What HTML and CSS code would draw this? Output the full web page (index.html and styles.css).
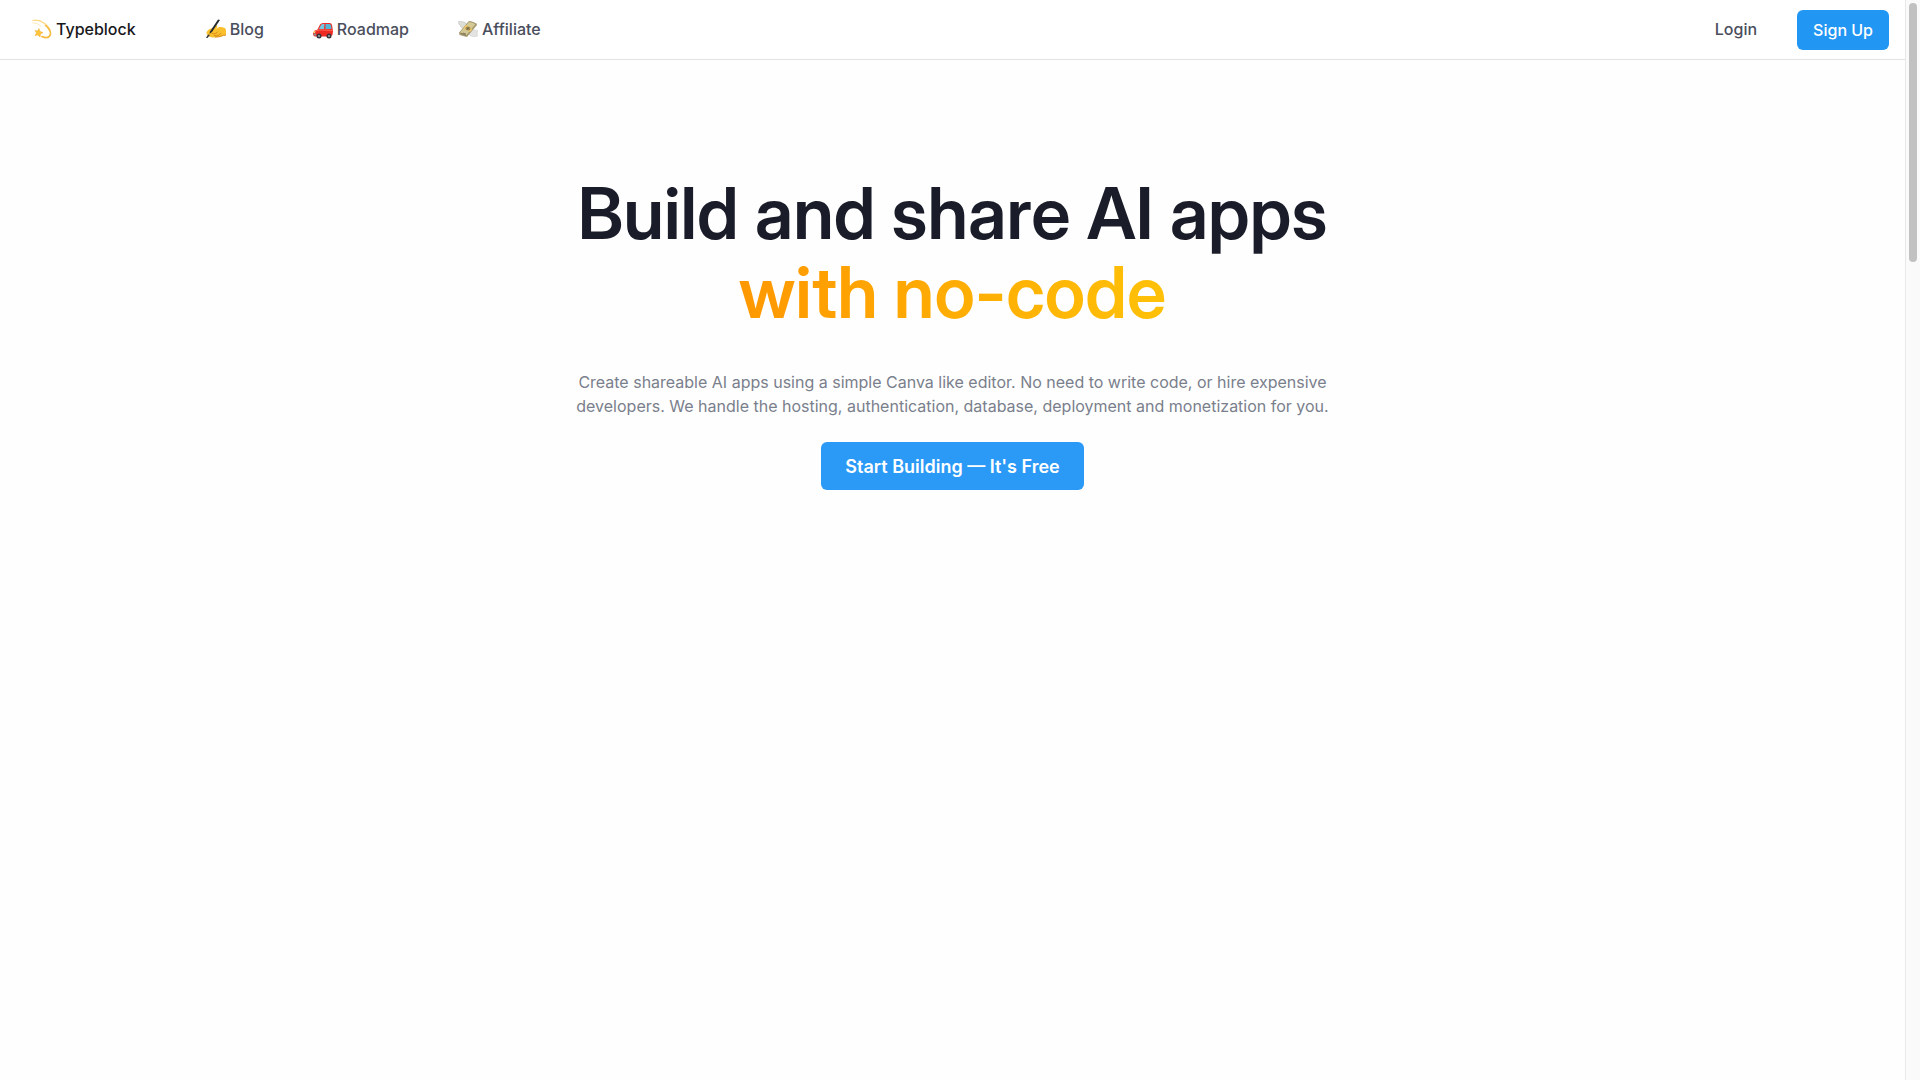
FILE: index.html
```html
<!DOCTYPE html>
<html lang="en">
<head>
    <meta charset="UTF-8">
    <meta name="viewport" content="width=device-width, initial-scale=1.0">
    <title>Typeblock</title>
    <link rel="stylesheet" href="styles.css">
</head>
<body>
    <div class="page">
        <header class="navbar">
            <a class="brand" href="#">
                <svg class="icon" viewBox="0 0 40 40" aria-hidden="true">
                    <path d="M2 3 C16 -1 38 14 37 29 C36 38 27 38 19 35" fill="none" stroke="#fbd77c" stroke-width="2.5" stroke-linecap="round"/>
                    <path d="M27 13 C35 19 39 28 36 33 C33 38 26 38 20 35" fill="none" stroke="#f6b93b" stroke-width="3" stroke-linecap="round"/>
                    <path d="M1 8 C7 7 14 10 18 15" fill="none" stroke="#fde9b8" stroke-width="2"/>
                    <path d="M14 19 L16 25 L22 27 L17 30 L16 36 L12 32 L6 33 L9 28 L6 23 L11 24 Z" fill="#fcc638" stroke="#f2a93b" stroke-width="1"/>
                </svg>
                <span>Typeblock</span>
            </a>
            <nav class="links">
                <a href="#">
                    <svg class="icon" viewBox="0 0 40 40" aria-hidden="true">
                        <path d="M2 25 C5 20 9 19 14 18 L19 13 C22 12 24 14 22 17 L19 20 C25 15 31 15 35 17 C39 18 40 20 40 24 L40 32 C35 31 31 36 25 36 L14 37 C9 37 4 35 4 32 C1 31 0 28 2 25 Z" fill="#fbc02d"/>
                        <path d="M12 29 C17 31 22 28 24 25 M16 33 C23 34 28 32 30 28 M18 36 C28 37 33 32 40 32" fill="none" stroke="#d98c16" stroke-width="2"/>
                        <path d="M24 1 L28 2 L12 26 L7 30 L8 25 Z" fill="#262a31"/>
                        <path d="M0 38 L4 31 L8 32 L3 38 Z" fill="#363636"/>
                    </svg>
                    <span>Blog</span>
                </a>
                <a href="#">
                    <svg class="icon" viewBox="0 0 40 40" aria-hidden="true">
                        <path d="M9 21 L14 11 Q16 8 20 8 L33 8 Q37 8 38 12 L40 24 L39 32 Q34 37 25 35 L4 35 Q0 34 0 29 Q1 23 9 21 Z" fill="#ed2b24"/>
                        <path d="M12 20 L16 12 Q17 10 20 10 L23 10 L22 20 Z" fill="#70c8e2"/>
                        <path d="M25 10 L33 10 Q35 10 36 13 L37 20 L25 20 Z" fill="#54b5d4"/>
                        <path d="M3 24 L13 22 L22 22 L39 23" stroke="#ff6a55" stroke-width="2" fill="none"/>
                        <path d="M1 29 L6 29 L6 33 L2 33 Z" fill="#8a9195"/>
                        <path d="M1 25 L5 24 L4 28 L1 28 Z" fill="#ffd66c"/>
                        <circle cx="12" cy="34" r="5" fill="#34363b"/>
                        <circle cx="12" cy="34" r="2" fill="#a2a8ae"/>
                        <circle cx="32" cy="34" r="5" fill="#34363b"/>
                        <circle cx="32" cy="34" r="2" fill="#a2a8ae"/>
                    </svg>
                    <span>Roadmap</span>
                </a>
                <a href="#">
                    <svg class="icon" viewBox="0 0 40 40" aria-hidden="true">
                        <path d="M1 5 C8 4 16 6 19 12 L14 19 C8 19 4 16 5 13 C2 12 1 9 1 5 Z" fill="#dcddd7" stroke="#b8bbb6"/>
                        <path d="M22 25 C28 20 35 22 39 23 C39 28 37 30 39 34 C35 36 27 36 22 31 Z" fill="#e4e5e2" stroke="#c4c7c3"/>
                        <path d="M2 28 L22 4 Q28 4 37 9 L38 12 L18 36 Q13 35 3 32 Z" fill="#a99d73"/>
                        <path d="M3 27 L22 5 Q29 6 36 10 L17 33 Q10 29 3 27 Z" fill="#d4c995" stroke="#8c825c"/>
                        <path d="M10 18 L16 12 Q24 15 29 21 L24 26 Q18 20 10 18 Z" fill="#efc56a"/>
                        <ellipse cx="20" cy="19" rx="5" ry="4" fill="#a58f58"/>
                        <path d="M6 29 Q12 30 16 33 M10 28 L16 30" fill="none" stroke="#716b52" stroke-width="1.5"/>
                        <path d="M18 17 L22 21 M21 16 L18 22" stroke="#69603f" stroke-width="1.5"/>
                    </svg>
                    <span>Affiliate</span>
                </a>
            </nav>
            <div class="account">
                <a class="login" href="#">Login</a>
                <button class="signup" type="button">Sign Up</button>
            </div>
        </header>
        <main class="hero">
            <h1>Build and share AI apps<br><span class="accent">with no-code</span></h1>
            <p>Create shareable AI apps using a simple Canva like editor. No need to write code, or hire expensive developers. We handle the hosting, authentication, database, deployment and monetization for you.</p>
            <button class="cta" type="button">Start Building — It's Free</button>
        </main>
    </div>
    <div class="scrollbar" aria-hidden="true">
        <div class="thumb"></div>
    </div>
</body>
</html>
```
FILE: styles.css
```css
* {
    box-sizing: border-box;
}
body {
    margin: 0;
    min-height: 100vh;
    display: flex;
    background: #fefefe;
    color: #1a202c;
    font-family: Inter, sans-serif;
    font-size: 16px;
    line-height: 24px;
}
a {
    color: inherit;
    text-decoration: none;
}
button {
    border: none;
    border-radius: 6px;
    background: #2196f3;
    color: #fff;
    font-family: inherit;
    cursor: pointer;
}
button:hover {
    background: #1e88e5;
}
.page {
    flex: 1;
    min-width: 0;
}
.navbar {
    display: flex;
    align-items: center;
    padding: 10px 16px 9px 32px;
    border-bottom: 1px solid #e2e2e4;
    background: #fff;
    font-weight: 500;
}
.brand, .links, .links a, .account {
    display: flex;
    align-items: center;
}
.brand, .links a, .login {
    gap: 4px;
    padding-bottom: 2px;
}
.brand {
    color: #18181b;
    margin-right: 70px;
}
.links {
    gap: 49px;
    color: #4a4e5c;
}
.icon {
    width: 20px;
    height: 20px;
}
.account {
    margin-left: auto;
    gap: 40px;
    color: #4a4e5c;
}
.signup {
    height: 40px;
    padding: 0 16px;
    font-size: 16px;
    font-weight: 500;
}
.hero {
    display: flex;
    flex-direction: column;
    align-items: center;
    padding: 114px 24px 48px;
    text-align: center;
}
h1 {
    margin: 0 0 38px;
    font-family: "Inter Display", Inter, sans-serif;
    font-size: 71px;
    line-height: 79px;
    font-weight: 600;
    font-variation-settings: "opsz" 32;
    color: #1a1d29;
}
.accent {
    background: linear-gradient(to right, #ff9800, #ffc107);
    -webkit-background-clip: text;
    background-clip: text;
    color: transparent;
}
.hero p {
    max-width: 768px;
    margin: 0 0 24px;
    color: #7a7f8c;
}
.cta {
    height: 48px;
    padding: 0 24px;
    background: #2b99f6;
    font-size: 18px;
    font-weight: 600;
}
.scrollbar {
    width: 15px;
    padding: 3px;
    border-left: 1px solid #e8e8e8;
    background: #fafafa;
}
.thumb {
    width: 8px;
    height: 24vh;
    border-radius: 4px;
    background: #c1c1c1;
}
@media (max-width: 800px) {
    .links {
        display: none;
    }
    h1 {
        font-size: 40px;
        line-height: 48px;
    }
}
```
